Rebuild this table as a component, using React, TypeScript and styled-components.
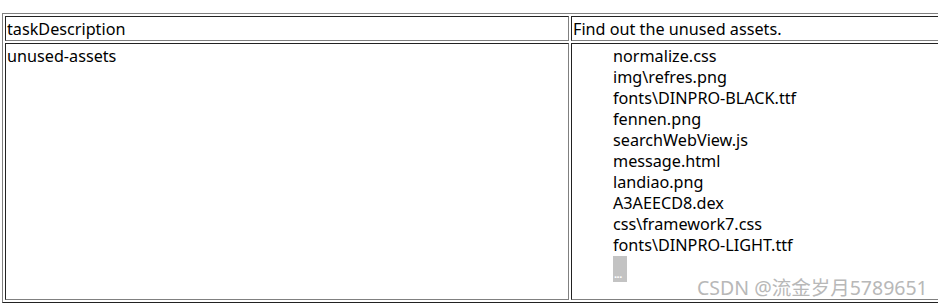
import styled, { createGlobalStyle } from "styled-components"

const GlobalStyle = createGlobalStyle`
  html, body {
    margin: 0;
    padding: 0;
    background: #fff;
    overflow: hidden;
  }
`

const Page = styled.div`
  position: relative;
  width: 938px;
  height: 303px;
  overflow: hidden;
  padding: 13px 0 0 2px;
  box-sizing: border-box;
  font-family: "Noto Sans", "Open Sans", sans-serif;
  font-size: 16.2px;
  color: #000;
`

const Table = styled.table`
  width: 1100px;
  border-collapse: separate;
  border-spacing: 2px;
  border: 1px solid;
  border-color: #808080 #222 #222 #808080;
  table-layout: fixed;
`

const Cell = styled.td<{ $width?: number; $height?: number }>`
  width: ${(p) => (p.$width ? `${p.$width}px` : "auto")};
  height: ${(p) => (p.$height ? `${p.$height}px` : "auto")};
  padding: 2px 1px 0;
  vertical-align: top;
  line-height: 21px;
  border: 1px solid;
  border-color: #222 #808080 #808080 #222;
  white-space: nowrap;
`

const AssetList = styled.ul`
  list-style: none;
  margin: 0;
  padding: 0 0 0 40px;
`

const Asset = styled.li`
  line-height: 21px;
`

const More = styled.li`
  display: inline-block;
  width: 14px;
  height: 26px;
  background: #c3c3c3;
  color: #fff;
  font-size: 11px;
  font-weight: bold;
  line-height: 10px;
  position: relative;
  span {
    position: absolute;
    left: 1px;
    bottom: 3px;
    letter-spacing: -0.5px;
  }
`

const Watermark = styled.div`
  position: absolute;
  left: 697px;
  top: 272px;
  font-family: "Noto Sans", "Noto Sans CJK SC", sans-serif;
  font-size: 19.5px;
  color: #b8b8b8;
  text-shadow: 0 0 1px rgba(255, 255, 255, 0.8);
  white-space: nowrap;
`

const assets = [
  "normalize.css",
  "img\\refres.png",
  "fonts\\DINPRO-BLACK.ttf",
  "fennen.png",
  "searchWebView.js",
  "message.html",
  "landiao.png",
  "A3AEECD8.dex",
  "css\\framework7.css",
  "fonts\\DINPRO-LIGHT.ttf",
]

export default function App() {
  return (
    <Page>
      <GlobalStyle />
      <Table>
        <tbody>
          <tr>
            <Cell $width={560}>taskDescription</Cell>
            <Cell>Find out the unused assets.</Cell>
          </tr>
          <tr>
            <Cell $height={253}>unused-assets</Cell>
            <Cell>
              <AssetList>
                {assets.map((a) => (
                  <Asset key={a}>{a}</Asset>
                ))}
                <More>
                  <span>...</span>
                </More>
              </AssetList>
            </Cell>
          </tr>
        </tbody>
      </Table>
      <Watermark>CSDN @流金岁月5789651</Watermark>
    </Page>
  )
}
